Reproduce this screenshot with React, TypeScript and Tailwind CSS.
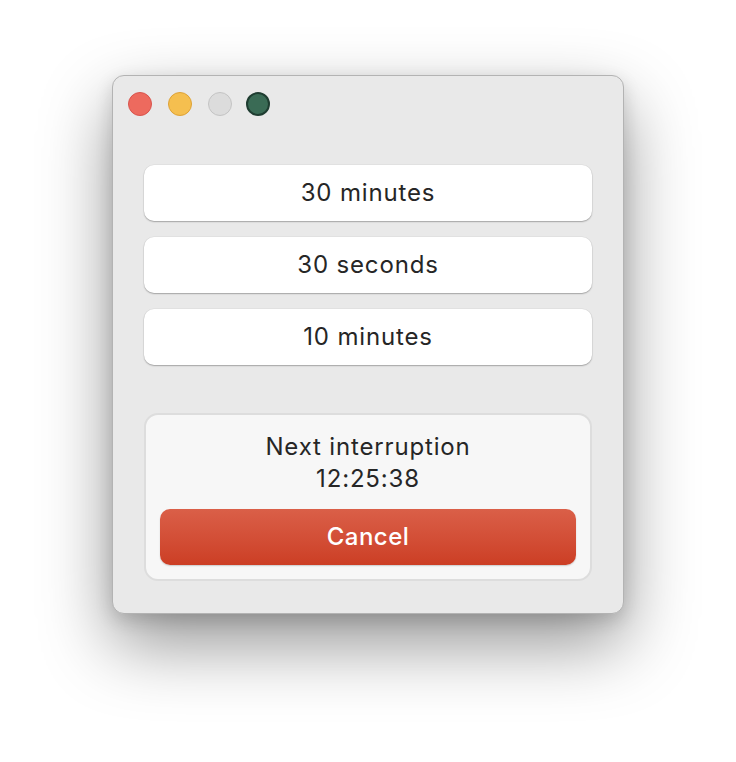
const font = { fontFamily: "Inter, 'Noto Sans', sans-serif" };

const choices = ["30 minutes", "30 seconds", "10 minutes"];

const App: React.FC = () => {
  return (
    <div className="min-h-[762px] w-[736px] bg-white pl-[112px] pt-[75px]" style={font}>
      <div className="flex h-[539px] w-[512px] flex-col rounded-[12px] border border-[#b3b3b3] bg-[#e9e9e9] shadow-[0_30px_70px_rgba(0,0,0,0.42),0_6px_18px_rgba(0,0,0,0.14)]">
        {/* Traffic lights */}
        <div className="flex items-center pl-[15px] pt-[16px]">
          <span className="h-[24px] w-[24px] rounded-full border border-[#d9544d] bg-[#ed6a5e]" />
          <span className="ml-[16px] h-[24px] w-[24px] rounded-full border border-[#dea236] bg-[#f5bf4f]" />
          <span className="ml-[16px] h-[24px] w-[24px] rounded-full border border-[#c4c4c4] bg-[#dcdcdc]" />
          <span className="ml-[14px] h-[24px] w-[24px] rounded-full border-2 border-[#1f3d31] bg-[#3a6b55]" />
        </div>

        <div className="flex flex-col gap-[16px] px-[31px] pt-[49px]">
          {choices.map((c) => (
            <button
              key={c}
              className="flex h-[56px] items-center justify-center rounded-[10px] bg-white text-[24px] tracking-[0.035em] text-[#262626] shadow-[0_1px_1.5px_rgba(0,0,0,0.28),0_0_0_0.5px_rgba(0,0,0,0.06)]"
            >
              {c}
            </button>
          ))}
        </div>

        <div className="mx-[31px] mt-[48px] flex h-[168px] flex-col items-center rounded-[14px] border-2 border-[#dddddd] bg-[#f7f7f7] px-[14px] pt-[16px]">
          <div className="text-[24px] leading-[32px] tracking-[0.035em] text-[#262626]">Next interruption</div>
          <div className="text-[24px] leading-[32px] tracking-[0.035em] text-[#262626]">12:25:38</div>
          <button className="mt-[14px] flex h-[56px] w-full items-center justify-center rounded-[10px] bg-gradient-to-b from-[#da5f48] to-[#cc3e24] text-[24px] font-medium tracking-[0.02em] text-white shadow-[0_1px_1.5px_rgba(0,0,0,0.18)]">
            Cancel
          </button>
        </div>
      </div>
    </div>
  );
};

export default App;
